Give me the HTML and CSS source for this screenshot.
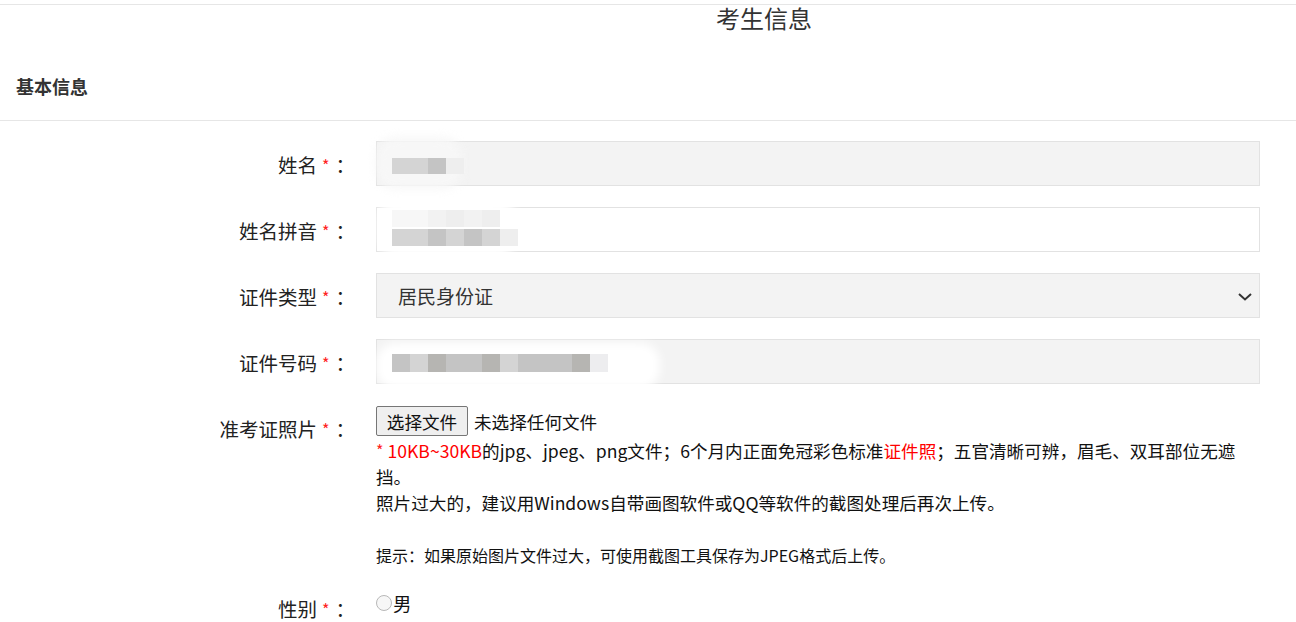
FILE: index.html
```html
<!DOCTYPE html>
<html lang="zh-CN">
  <head>
    <meta charset="UTF-8" />
    <meta name="viewport" content="width=device-width, initial-scale=1.0" />
    <title>考生信息</title>
    <link rel="stylesheet" href="styles.css">
  </head>
  <body>
    <div class="page">
      <h1 class="title">考生信息</h1>

      <div class="section-head">基本信息</div>

      <div class="form">
        <!-- 姓名 -->
        <div class="row">
          <label class="label">姓名<i class="req">*</i>：</label>
          <div class="field">
            <input class="input" type="text" disabled />
            <div class="halo halo-name"></div>
            <div class="mosaic mosaic-name">
              <b class="g2"></b><b class="g2"></b><b class="g1"></b><b class="g5"></b>
            </div>
          </div>
        </div>

        <!-- 姓名拼音 -->
        <div class="row">
          <label class="label">姓名拼音<i class="req">*</i>：</label>
          <div class="field">
            <input class="input input-white" type="text" />
            <div class="halo halo-pinyin"></div>
            <div class="mosaic mosaic-pinyin">
              <div class="mrow">
                <b class="g6"></b><b class="g6"></b><b class="g7"></b><b class="g5"></b><b class="g7"></b><b class="g5"></b>
              </div>
              <div class="mrow">
                <b class="g2"></b><b class="g2"></b><b class="g1"></b><b class="g2"></b><b class="g1"></b><b class="g2"></b><b class="g5"></b>
              </div>
            </div>
          </div>
        </div>

        <!-- 证件类型 -->
        <div class="row">
          <label class="label">证件类型<i class="req">*</i>：</label>
          <div class="field">
            <select class="input select">
              <option>居民身份证</option>
            </select>
            <svg class="chevron" width="14" height="8" viewBox="0 0 14 8">
              <path d="M1 1 L7 6.5 L13 1" fill="none" stroke="#333" stroke-width="2" />
            </svg>
          </div>
        </div>

        <!-- 证件号码 -->
        <div class="row">
          <label class="label">证件号码<i class="req">*</i>：</label>
          <div class="field">
            <input class="input" type="text" disabled />
            <div class="halo halo-id"></div>
            <div class="mosaic mosaic-id">
              <b class="g1"></b><b class="g2"></b><b class="g3"></b><b class="g1"></b><b class="g1"></b><b class="g3"></b><b class="g2"></b><b class="g1"></b><b class="g1"></b><b class="g1"></b><b class="g3"></b><b class="g4"></b>
            </div>
          </div>
        </div>

        <!-- 准考证照片 -->
        <div class="row row-top">
          <label class="label label-photo">准考证照片<i class="req">*</i>：</label>
          <div class="field">
            <div class="file-line">
              <button class="file-btn" type="button">选择文件</button>
              <span class="file-name">未选择任何文件</span>
            </div>
            <p class="desc">
              <span class="red"><i class="req req-inline">*</i> 10KB~30KB</span>的jpg、jpeg、png文件；6个月内正面免冠彩色标准<span class="red">证件照</span>；五官清晰可辨，眉毛、双耳部位无遮挡。<br />
              照片过大的，建议用Windows自带画图软件或QQ等软件的截图处理后再次上传。<br />
              <br />
              <span class="hint">提示：如果原始图片文件过大，可使用截图工具保存为JPEG格式后上传。</span>
            </p>
          </div>
        </div>

        <!-- 性别 -->
        <div class="row row-top">
          <label class="label label-sex">性别<i class="req">*</i>：</label>
          <div class="field radios">
            <label class="radio"><input type="radio" name="sex" />男</label>
          </div>
        </div>
      </div>
    </div>
  </body>
</html>
```

FILE: styles.css
```css
* {
  box-sizing: border-box;
}

body {
  margin: 0;
  padding-top: 4px;
  font-family: "Noto Sans CJK SC", "Microsoft YaHei", sans-serif;
  color: #333;
  background: #fff;
  overflow: hidden;
}

.page {
  border-top: 1px solid #e6e6e6;
}

.title {
  margin: 0;
  padding-left: 232px;
  text-align: center;
  font-size: 24px;
  font-weight: normal;
  line-height: 25px;
  height: 28px;
}

.section-head {
  padding: 39px 16px 20px;
  font-size: 18px;
  font-weight: bold;
  line-height: 28px;
  border-bottom: 1px solid #e6e6e6;
}

.form {
  padding-top: 20px;
}

.row {
  display: grid;
  grid-template-columns: 355px 884px;
  column-gap: 21px;
  align-items: center;
  margin-bottom: 21px;
}

.row-top {
  align-items: start;
  margin-bottom: 0;
}

.label {
  padding-top: 2px;
  text-align: right;
  font-size: 19.5px;
  line-height: 26px;
  color: #222;
}

.label-photo {
  padding-top: 11px;
}

.label-sex {
  padding-top: 28px;
}

.req {
  font-style: normal;
  color: #f22;
  font-size: 16px;
  margin: 0 6px 0 5px;
  vertical-align: 1px;
}

.field {
  position: relative;
}

.input {
  display: block;
  width: 100%;
  height: 45px;
  padding: 0 22px;
  border: 1px solid #e2e2e2;
  background: #f3f3f3;
  font-family: inherit;
  font-size: 19px;
  color: #333;
  outline: none;
}

.input-white {
  background: #fff;
}

.select {
  appearance: none;
  -webkit-appearance: none;
  border-radius: 0;
  padding-left: 21px;
}

.chevron {
  position: absolute;
  right: 8px;
  top: 20px;
  pointer-events: none;
}

/* blurred values */
.halo {
  position: absolute;
  background: #fff;
  filter: blur(5px);
  border-radius: 20px;
}

.halo-name {
  left: 0;
  top: -4px;
  width: 86px;
  height: 52px;
  background: #f7f7f7;
}

.halo-pinyin {
  left: 2px;
  top: -8px;
  width: 138px;
  height: 58px;
}

.halo-id {
  left: 0;
  top: 4px;
  width: 284px;
  height: 46px;
}

.mosaic {
  position: absolute;
  left: 16px;
  display: flex;
  flex-direction: row;
}

.mosaic b {
  display: block;
  width: 18px;
  height: 16px;
}

.mosaic-name {
  top: 17px;
}

.mosaic-pinyin {
  top: 3px;
  flex-direction: column;
  gap: 2px;
}

.mosaic-pinyin b {
  height: 17px;
}

.mrow {
  display: flex;
}

.mosaic-id {
  top: 15px;
}

.mosaic-id b {
  height: 18px;
}

.g1 { background: #c4c4c4; }
.g2 { background: #d4d4d4; }
.g3 { background: #b6b5b2; }
.g4 { background: #ededef; }
.g5 { background: #eeeeee; }
.g6 { background: #f7f7f7; }
.g7 { background: #f2f2f2; }

/* photo upload */
.file-line {
  display: flex;
  align-items: center;
  height: 30px;
  margin-top: 1px;
}

.file-btn {
  height: 30px;
  width: 92px;
  padding: 0;
  border: 1px solid #767676;
  border-radius: 2px;
  background: #efefef;
  font-family: inherit;
  font-size: 17.6px;
  color: #111;
}

.file-name {
  margin-left: 6px;
  font-size: 17.6px;
  color: #111;
}

.desc {
  margin: 1px 0 0;
  font-size: 17.6px;
  line-height: 26px;
  color: #111;
}

.red {
  color: #f00;
}

.req-inline {
  margin: 0;
}

.hint {
  display: inline-block;
  font-size: 16px;
  line-height: 20px;
}

.radios {
  padding-top: 23px;
}

.radio {
  display: flex;
  align-items: center;
  font-size: 18.5px;
  line-height: 24px;
  color: #111;
}

.radio input {
  appearance: none;
  -webkit-appearance: none;
  margin: 0 1px 0 0;
  width: 16px;
  height: 16px;
  border: 1px solid #b8b8b8;
  border-radius: 50%;
  background: #f7f7f7;
}
```
